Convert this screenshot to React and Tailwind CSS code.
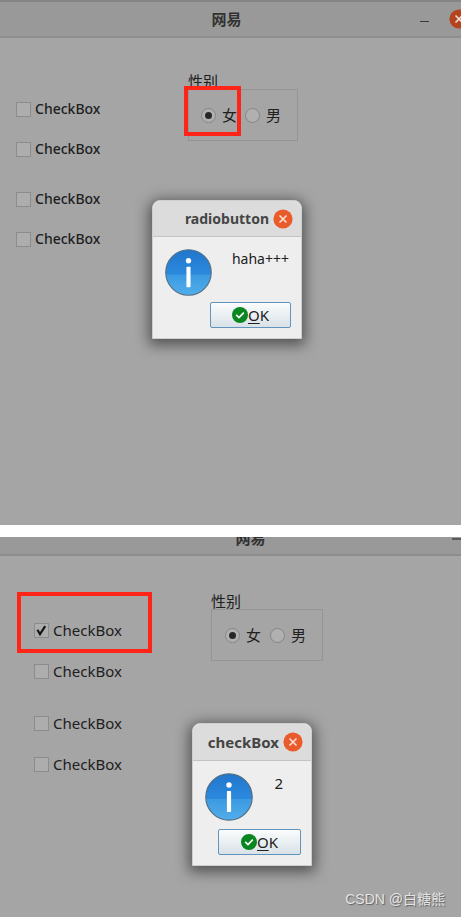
import React from "react";

function CloseIcon({ className }) {
  return (
    <svg viewBox="0 0 20 20" className={className} aria-hidden="true">
      <circle cx="10" cy="10" r="9.6" fill="currentColor" />
      <path d="M6.5 6.5 13.5 13.5M13.5 6.5 6.5 13.5" stroke="#fff" strokeOpacity="0.8" strokeWidth="1.6" />
    </svg>
  );
}

function InfoIcon({ className }) {
  return (
    <svg viewBox="0 0 48 48" className={className} role="img" aria-label="Information">
      <defs>
        <linearGradient id="info-blue" x1="0" y1="0" x2="0" y2="1">
          <stop offset="0" stopColor="#2176cc" />
          <stop offset="0.54" stopColor="#2b8add" />
          <stop offset="0.55" stopColor="#3b9ae2" />
          <stop offset="1" stopColor="#52aeea" />
        </linearGradient>
      </defs>
      <circle cx="24" cy="24" r="23.2" fill="url(#info-blue)" stroke="#536f86" strokeWidth="1.2" />
      <circle cx="24" cy="12" r="2.7" fill="#fff" />
      <rect x="21.9" y="18" width="4.2" height="21" rx="0.8" fill="#fff" />
    </svg>
  );
}

function OkIcon() {
  return (
    <svg viewBox="0 0 16 16" className="size-4" aria-hidden="true">
      <circle cx="8" cy="8" r="8" fill="#098620" />
      <path d="M4.2 7.8 7 10.5 11.8 5.6" fill="none" stroke="#fff" strokeWidth="1.6" />
    </svg>
  );
}

function CheckBox({ checked = false }) {
  return (
    <label className="flex h-5 items-center gap-1">
      <span className="relative size-[15px]">
        <input
          type="checkbox"
          defaultChecked={checked}
          className="peer block size-[15px] appearance-none border border-[#8c8c8c] bg-[#adadad]"
        />
        <svg viewBox="0 0 15 15" className="pointer-events-none absolute inset-0 hidden size-[15px] peer-checked:block" aria-hidden="true">
          <path d="M3.4 6.8 6 11.2 11.2 3.2" fill="none" stroke="#151515" strokeWidth="2.2" />
        </svg>
      </span>
      <span>CheckBox</span>
    </label>
  );
}

function Radio({ name, label, checked = false }) {
  return (
    <label className="flex items-center gap-[6px]">
      <input
        type="radio"
        name={name}
        defaultChecked={checked}
        className="flex size-[15px] appearance-none items-center justify-center rounded-full border border-[#858585] bg-[#b0b0b0] before:size-[7px] before:rounded-full before:content-[''] checked:before:bg-[#262626]"
      />
      <span className="text-[15px]">{label}</span>
    </label>
  );
}

function GenderGroup({ name, className, boxClass }) {
  return (
    <fieldset className={className}>
      <legend className="text-[15px] leading-4">性别</legend>
      <div className={`flex h-[52px] items-center border border-[#959595] pr-4 ${boxClass}`}>
        <Radio name={name} label="女" checked />
        <Radio name={name} label="男" />
      </div>
    </fieldset>
  );
}

function MessageDialog({ title, message, className, headerClass, messageClass, iconClass, footerClass, buttonClass }) {
  return (
    <section
      role="dialog"
      aria-label={title}
      className={`absolute rounded-t-lg border border-[#cfcfcf] bg-[#eeeeee] shadow-[0_3px_14px_3px_rgba(0,0,0,0.5)] ${className}`}
    >
      <header className={`flex items-center justify-end gap-1 rounded-t-lg border-b border-[#c4c4c4] bg-[#dcdcdc] pr-2 ${headerClass}`}>
        <h2 className="font-bold text-[#454545]">{title}</h2>
        <button type="button" aria-label="Close">
          <CloseIcon className="size-5 text-[#e95b2b]" />
        </button>
      </header>
      <div className="flex justify-between pl-3 pt-3">
        <InfoIcon className={iconClass} />
        <p className={messageClass}>{message}</p>
      </div>
      <div className={`flex justify-end px-[10px] pb-[10px] ${footerClass}`}>
        <button
          type="button"
          className={`flex h-[26px] items-center justify-center rounded-[2px] border border-[#5f94bd] bg-linear-to-b from-[#fbfcfc] to-[#d9e2e8] text-[15px] ${buttonClass}`}
        >
          <OkIcon />
          <span>
            <span className="underline underline-offset-2">O</span>K
          </span>
        </button>
      </div>
    </section>
  );
}

export default function App() {
  return (
    <main className="flex min-h-screen flex-col gap-3 bg-white font-['Noto_Sans','Noto_Sans_CJK_SC',sans-serif] text-[14px] leading-5 text-[#202020]">
      <section className="relative min-h-[525px] overflow-hidden bg-[#a5a5a5]">
        <header className="grid h-[38px] grid-cols-[1fr_auto_1fr] items-center border-b-2 border-t-2 border-b-[#8f8f8f] border-t-[#858585] bg-[#999999]">
          <h1 className="col-start-2 pr-2 text-[15px] font-bold text-[#323232]">网易</h1>
          <div className="-mr-2 flex items-center justify-end gap-5">
            <button type="button" aria-label="Minimize" className="flex h-5 w-[9px] items-center">
              <span className="mt-1 h-px w-full bg-[#3a3a3a]" />
            </button>
            <button type="button" aria-label="Close">
              <CloseIcon className="size-5 text-[#b4441e]" />
            </button>
          </div>
        </header>
        <div className="flex pl-4">
          <div className="flex w-[172px] flex-col gap-[30px] pt-[61px] font-medium">
            <div className="flex flex-col gap-5">
              <CheckBox />
              <CheckBox />
            </div>
            <div className="flex flex-col gap-5">
              <CheckBox />
              <CheckBox />
            </div>
          </div>
          <GenderGroup name="gender-first" className="mt-[35px]" boxClass="gap-2 pl-3" />
        </div>
        <div className="pointer-events-none absolute left-[184px] top-[86px] h-[50px] w-[57px] border-4 border-[#ff2418]" />
        <MessageDialog
          title="radiobutton"
          message="haha+++"
          className="left-[152px] top-[200px] w-[150px]"
          headerClass="h-9 text-[14px]"
          messageClass="pr-3"
          iconClass="size-[47px]"
          footerClass="pt-[6px]"
          buttonClass="w-[81px]"
        />
      </section>

      <section className="relative min-h-[380px] grow overflow-hidden bg-[#a5a5a5]">
        <header className="grid h-[19px] grid-cols-[1fr_auto_1fr] grid-rows-[17px] items-end overflow-hidden border-b-2 border-b-[#8c8c8c] bg-[#999999]">
          <h1 className="col-start-2 flex h-8 items-center pl-10 text-[15px] font-bold text-[#323232]">网易</h1>
          <div className="flex h-full items-start justify-end">
            <button type="button" aria-label="Minimize" className="flex h-1 w-[9px] items-center">
              <span className="h-[2px] w-full bg-[#5a5a5a]" />
            </button>
          </div>
        </header>
        <div className="flex pl-[34px]">
          <div className="flex w-[177px] flex-col gap-8 pt-16 text-[15px]">
            <div className="flex flex-col gap-[21px]">
              <CheckBox checked />
              <CheckBox />
            </div>
            <div className="flex flex-col gap-[21px]">
              <CheckBox />
              <CheckBox />
            </div>
          </div>
          <GenderGroup name="gender-second" className="mt-[37px]" boxClass="gap-[9px] pl-[13px]" />
        </div>
        <div className="pointer-events-none absolute left-[17px] top-[55px] h-[61px] w-[135px] border-4 border-[#ff2418]" />
        <MessageDialog
          title="checkBox"
          message="2"
          className="left-[192px] top-[186px] w-[120px]"
          headerClass="h-[37px] text-[15px]"
          messageClass="pr-7 text-[15px]"
          iconClass="size-12"
          footerClass="pt-2"
          buttonClass="w-[83px]"
        />
        <p className="absolute bottom-2 right-4 font-['Liberation_Sans','Noto_Sans_CJK_SC',sans-serif] text-[14px] text-[#e4e4e4] [text-shadow:1px_1px_1px_#606060]">CSDN @白糖熊</p>
      </section>
    </main>
  );
}
